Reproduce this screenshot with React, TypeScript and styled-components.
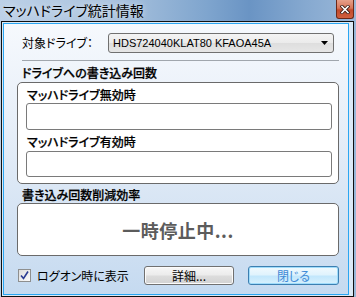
import styled, { createGlobalStyle } from "styled-components";

const GlobalStyle = createGlobalStyle`
  html, body {
    margin: 0;
    padding: 0;
  }
  body {
    font-family: "Noto Sans CJK JP", "Liberation Sans", sans-serif;
    font-feature-settings: "palt";
    color: #000;
  }
`;

const Window = styled.div`
  width: 356px;
  height: 297px;
  display: flex;
  flex-direction: column;
  background: linear-gradient(
    90deg,
    #bcd0e7 0%,
    #adc5df 30%,
    #7fa5ce 58%,
    #6a94c4 70%,
    #86a9d0 86%,
    #9ab8d9 100%
  );
  overflow: hidden;
`;

const TitleBar = styled.div`
  height: 21px;
  display: flex;
  justify-content: space-between;
  align-items: flex-start;
  padding-left: 3px;
`;

const Title = styled.div`
  font-size: 14px;
  line-height: 20px;
  color: #000;
  text-shadow: 0 0 6px rgba(255, 255, 255, 0.7);
`;

const CloseButton = styled.div`
  width: 18px;
  height: 19px;
  margin-right: 2px;
  box-sizing: border-box;
  border: 1px solid #6b2818;
  border-top: none;
  border-radius: 0 0 3px 3px;
  background: linear-gradient(#e6a08a 0%, #d8765a 45%, #c24a2c 55%, #d1603e 100%);
  display: flex;
  align-items: center;
  justify-content: center;
`;

const Frame = styled.div`
  flex: 1;
  margin: 0 2px 0 1px;
  border: 1px solid #101010;
  padding: 1px 4px 1px 1px;
  background: #dbe9f6;
  display: flex;
`;

const Client = styled.div`
  flex: 1;
  border: 1px solid #2aa6f2;
  background: linear-gradient(#f6f9fd 0%, #e6eef8 40%, #d3e2f3 75%, #c5daf0 100%);
  padding: 9px 9px 0 13px;
  display: flex;
  flex-direction: column;
`;

const DriveRow = styled.div`
  height: 20px;
  display: flex;
  align-items: center;
  padding-left: 5px;
`;

const Label = styled.span`
  font-size: 12px;
  line-height: 16px;
  white-space: nowrap;
`;

const Select = styled.div`
  width: 226px;
  height: 20px;
  box-sizing: border-box;
  margin-left: auto;
  margin-right: 5px;
  border: 1px solid #707070;
  border-radius: 3px;
  background: linear-gradient(#f4f4f4 0%, #ebebeb 50%, #dedede 51%, #e6e6e6 100%);
  display: flex;
  align-items: center;
  padding: 0 5px 0 4px;
`;

const SelectText = styled.span`
  flex: 1;
  font-family: "Liberation Sans", sans-serif;
  font-size: 11px;
  color: #000;
`;

const Separator = styled.div`
  height: 1px;
  margin: 7px 0 0 5px;
  background: #a0a6ad;
`;

const SectionLabel = styled.div<{ $top: number }>`
  margin: ${(p) => p.$top}px 0 0 5px;
  font-size: 12px;
  line-height: 16px;
  font-weight: 500;
  -webkit-text-stroke: 0.25px #000;
`;

const GroupBox = styled.div`
  margin-top: 1px;
  border: 1px solid #6a6a6a;
  border-radius: 5px;
  background: #fff;
  padding: 4px 6px 6px 8px;
  display: flex;
  flex-direction: column;
`;

const FieldLabel = styled.div<{ $top: number }>`
  margin: ${(p) => p.$top}px 0 0 1px;
  font-size: 12px;
  line-height: 16px;
  font-weight: 500;
  -webkit-text-stroke: 0.2px #000;
`;

const Field = styled.div<{ $h: number }>`
  height: ${(p) => p.$h}px;
  box-sizing: border-box;
  border: 1px solid #7a7a7a;
  border-radius: 3px;
  background: #fff;
`;

const StatusBox = styled.div`
  height: 53px;
  box-sizing: border-box;
  border: 1px solid #6a6a6a;
  border-radius: 5px;
  background: #fff;
  display: flex;
  align-items: center;
  justify-content: center;
`;

const StatusText = styled.span`
  font-size: 18px;
  font-weight: 700;
  color: #5c5c5c;
  letter-spacing: 0.5px;
`;

const BottomRow = styled.div`
  margin-top: 10px;
  display: flex;
  align-items: center;
  padding-left: 1px;
`;

const CheckBox = styled.div`
  width: 13px;
  height: 13px;
  box-sizing: border-box;
  border: 1px solid #8e8f8f;
  background: linear-gradient(135deg, #dcdcdc, #fbfbfb);
  margin-right: 6px;
  display: flex;
  align-items: center;
  justify-content: center;
`;

const Button = styled.div<{ $primary?: boolean }>`
  height: 19px;
  box-sizing: border-box;
  width: ${(p) => (p.$primary ? 91 : 90)}px;
  margin-left: ${(p) => (p.$primary ? "14px" : "auto")};
  border: 1px solid ${(p) => (p.$primary ? "#3c7fb1" : "#707070")};
  border-radius: 3px;
  background: ${(p) =>
    p.$primary
      ? "linear-gradient(#f1fafe 0%, #e0f3fd 45%, #c2e7fc 55%, #d8f1fd 100%)"
      : "linear-gradient(#f7f7f7 0%, #ececec 45%, #dcdcdc 55%, #d2d2d2 100%)"};
  box-shadow: ${(p) =>
    p.$primary ? "inset 0 0 0 1px #9fdcfb" : "inset 0 0 0 1px #fbfbfb"};
  display: flex;
  align-items: center;
  justify-content: center;
  font-size: 12px;
  line-height: 16px;
  color: ${(p) => (p.$primary ? "#3f8ad6" : "#000")};
`;

export default function App() {
  return (
    <>
      <GlobalStyle />
      <Window>
        <TitleBar>
          <Title>マッハドライブ統計情報</Title>
          <CloseButton>
            <svg width="10" height="9" viewBox="0 0 10 9">
              <path d="M2 1.5 L8 7.5 M8 1.5 L2 7.5" stroke="#3a1a12" strokeWidth="3.2" strokeLinecap="square" />
              <path d="M2 1.5 L8 7.5 M8 1.5 L2 7.5" stroke="#fff" strokeWidth="1.6" strokeLinecap="square" />
            </svg>
          </CloseButton>
        </TitleBar>
        <Frame>
          <Client>
            <DriveRow>
              <Label>対象ドライブ：</Label>
              <Select>
                <SelectText>HDS724040KLAT80 KFAOA45A</SelectText>
                <svg width="7" height="4" viewBox="0 0 7 4">
                  <path d="M0 0 H7 L3.5 4 Z" fill="#000" />
                </svg>
              </Select>
            </DriveRow>
            <Separator />
            <SectionLabel $top={4}>ドライブへの書き込み回数</SectionLabel>
            <GroupBox>
              <FieldLabel $top={0}>マッハドライブ無効時</FieldLabel>
              <Field $h={27} />
              <FieldLabel $top={4}>マッハドライブ有効時</FieldLabel>
              <Field $h={26} style={{ marginTop: 1 }} />
            </GroupBox>
            <SectionLabel $top={3}>書き込み回数削減効率</SectionLabel>
            <StatusBox>
              <StatusText>一時停止中...</StatusText>
            </StatusBox>
            <BottomRow>
              <CheckBox>
                <svg width="9" height="9" viewBox="0 0 9 9">
                  <path d="M1 4.5 L3.5 7.5 L8 0.5" stroke="#2b3c93" strokeWidth="1.6" fill="none" />
                </svg>
              </CheckBox>
              <Label>ログオン時に表示</Label>
              <Button>詳細...</Button>
              <Button $primary>閉じる</Button>
            </BottomRow>
          </Client>
        </Frame>
      </Window>
    </>
  );
}
